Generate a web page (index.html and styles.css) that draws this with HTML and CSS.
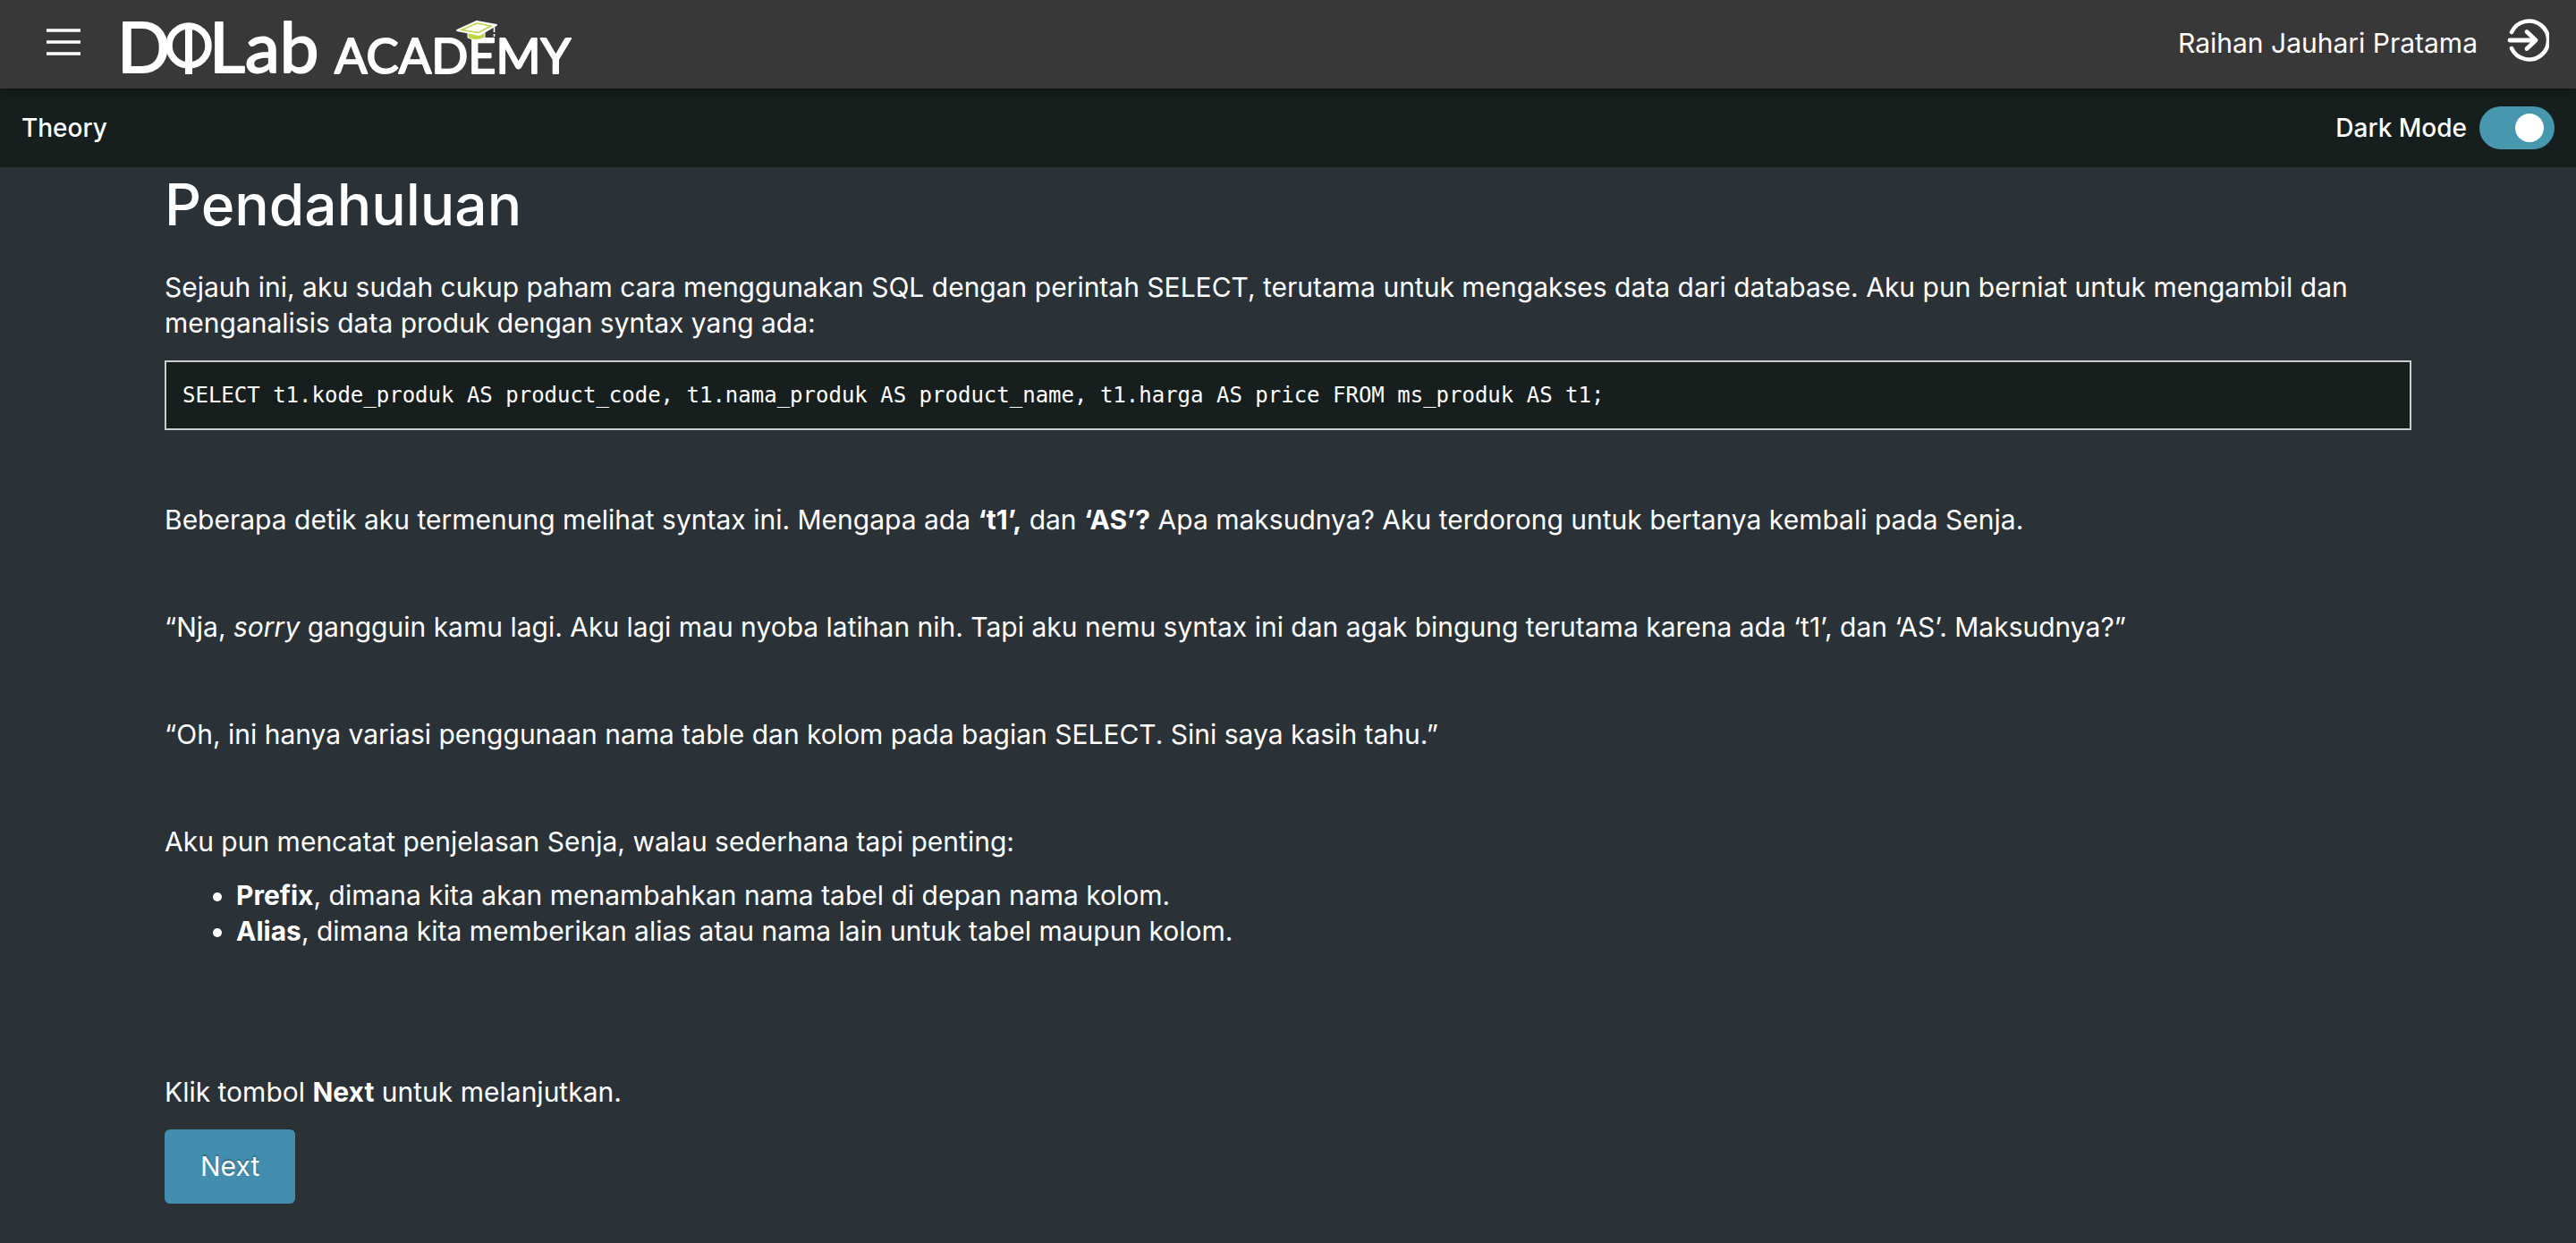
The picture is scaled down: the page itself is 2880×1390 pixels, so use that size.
FILE: index.html
```html
<!DOCTYPE html>
<html lang="id">
<head>
<meta charset="utf-8">
<meta name="viewport" content="width=device-width, initial-scale=1">
<title>Pendahuluan - DQLab Academy</title>
<link rel="stylesheet" href="styles.css">
</head>
<body>
<header class="topbar">
  <button class="icon-button menu" type="button" aria-label="Menu">
    <svg width="38" height="30" viewBox="0 0 38 30" aria-hidden="true"><path d="M0 2H38M0 15H38M0 28H38" stroke="#fff" stroke-width="3.6"/></svg>
  </button>
  <a class="logo" href="#" aria-label="DQLab Academy">
    <svg width="520" height="99" viewBox="0 0 520 99" aria-hidden="true">
      <g class="wordmark">
        <text class="wordmark-big" x="1" y="81">D</text>
        <text class="wordmark-big" x="104" y="81">Lab</text>
        <text class="wordmark-small" x="244" y="82">ACADEMY</text>
      </g>
      <circle cx="81" cy="51" r="22" fill="none" stroke="#fff" stroke-width="7.5"/>
      <path d="M81 27V83" stroke="#fff" stroke-width="8"/>
      <g transform="translate(7 22)">
        <path d="M386 13V20Q395 25 405 20V13Z" fill="#bfd345" stroke="#fff" stroke-width="1"/>
        <path d="M374 12L396 2L418 6L399 17Z" fill="#fff" stroke="#fff" stroke-width="2" stroke-linejoin="round"/>
        <path d="M379 11.500L396 4L412 7L398 14.500Z" fill="#fff" stroke="#bfd345" stroke-width="1.600"/>
        <path d="M415.500 7V14M415.500 16V19" stroke="#fff" stroke-width="1.600"/>
      </g>
    </svg>
  </a>
  <span class="user">Raihan Jauhari Pratama</span>
  <button class="icon-button exit" type="button" aria-label="Keluar">
    <svg width="48" height="48" viewBox="0 0 48 48" fill="none" stroke="#fff" stroke-linecap="round" stroke-linejoin="round" aria-hidden="true">
      <path d="M6 15A21.500 21.500 0 1 1 6 33" stroke-width="4.500"/>
      <path d="M4 24H33M23 14.500L33 24L23 33.500" stroke-width="4.800"/>
    </svg>
  </button>
</header>
<div class="subbar">
  <span>Theory</span>
  <label class="mode">Dark Mode <input class="switch" type="checkbox" role="switch" checked></label>
</div>
<main class="content">
  <h1>Pendahuluan</h1>
  <p>Sejauh ini, aku sudah cukup paham cara menggunakan SQL dengan perintah SELECT, terutama untuk mengakses data dari database. Aku pun berniat untuk mengambil dan menganalisis data produk dengan syntax yang ada:</p>
  <pre><code>SELECT t1.kode_produk AS product_code, t1.nama_produk AS product_name, t1.harga AS price FROM ms_produk AS t1;</code></pre>
  <p class="spaced">Beberapa detik aku termenung melihat syntax ini. Mengapa ada <strong>‘t1’,</strong> dan <strong>‘AS’?</strong> Apa maksudnya? Aku terdorong untuk bertanya kembali pada Senja.</p>
  <p class="spaced">“Nja, <em>sorry</em> gangguin kamu lagi. Aku lagi mau nyoba latihan nih. Tapi aku nemu syntax ini dan agak bingung terutama karena ada ‘t1’, dan ‘AS’. Maksudnya?”</p>
  <p class="spaced">“Oh, ini hanya variasi penggunaan nama table dan kolom pada bagian SELECT. Sini saya kasih tahu.”</p>
  <p class="spaced">Aku pun mencatat penjelasan Senja, walau sederhana tapi penting:</p>
  <ul>
    <li><strong>Prefix</strong>, dimana kita akan menambahkan nama tabel di depan nama kolom.</li>
    <li><strong>Alias</strong>, dimana kita memberikan alias atau nama lain untuk tabel maupun kolom.</li>
  </ul>
  <p class="closing">Klik tombol <strong>Next</strong> untuk melanjutkan.</p>
  <button class="next" type="button">Next</button>
</main>
</body>
</html>
```
FILE: styles.css
```css
* {
  box-sizing: border-box;
}

body {
  margin: 0;
  min-height: 100vh;
  background: #2a3238;
  color: #fff;
  font: 30px/40px Inter, sans-serif;
}

.topbar {
  position: relative;
  display: flex;
  align-items: center;
  height: 99px;
  padding: 0 30px 0 52px;
  background: #383838;
  box-shadow: 0 2px 12px rgba(0, 0, 0, 0.5);
}

.icon-button {
  display: flex;
  padding: 0;
  border: 0;
  background: none;
  cursor: pointer;
}

.menu {
  margin-bottom: 6px;
}

.exit {
  margin-bottom: 10px;
}

.logo {
  display: flex;
  margin: 0 auto 0 40px;
}

.wordmark {
  fill: #fff;
  stroke: #fff;
  stroke-width: 2px;
  stroke-linejoin: round;
  font-family: Lato, sans-serif;
}

.wordmark-big {
  font-size: 78px;
}

.wordmark-small {
  font-size: 54px;
}

.user {
  margin: 0 32px 4px 0;
}

.subbar {
  display: flex;
  align-items: center;
  justify-content: space-between;
  height: 88px;
  padding: 0 24px;
  background: #171f1e;
  font-size: 28px;
  font-weight: 500;
}

.mode {
  display: flex;
  align-items: center;
  gap: 14px;
}

.switch {
  appearance: none;
  display: flex;
  align-items: center;
  width: 84px;
  height: 48px;
  margin: 0;
  padding: 0 12px;
  border-radius: 24px;
  background: #777;
  cursor: pointer;
}

.switch::before {
  content: "";
  width: 32px;
  height: 32px;
  border-radius: 50%;
  background: #fff;
}

.switch:checked {
  justify-content: flex-end;
  background: #4797af;
}

.content {
  padding: 6px 184px 42px;
}

h1 {
  margin: 0 0 36px;
  font-size: 64px;
  line-height: 72px;
  font-weight: 500;
}

p,
ul {
  margin: 0 0 20px;
}

ul {
  padding-left: 80px;
}

pre {
  margin: 22px 0 20px;
  padding: 18px;
  border: 2px solid #ccc;
  background: #171f1e;
  overflow-x: auto;
}

code {
  display: block;
  font: 24px/38px "DejaVu Sans Mono", monospace;
}

strong {
  font-weight: 700;
}

.spaced {
  margin-top: 80px;
}

.closing {
  margin: 140px 0 22px;
}

.next {
  display: block;
  padding: 20px 40px;
  border: 0;
  border-radius: 6px;
  background: #438eae;
  color: #fff;
  font: 30px/43px Inter, sans-serif;
  text-shadow: 0 -2px 2px rgba(0, 0, 0, 0.25);
  cursor: pointer;
}
```
